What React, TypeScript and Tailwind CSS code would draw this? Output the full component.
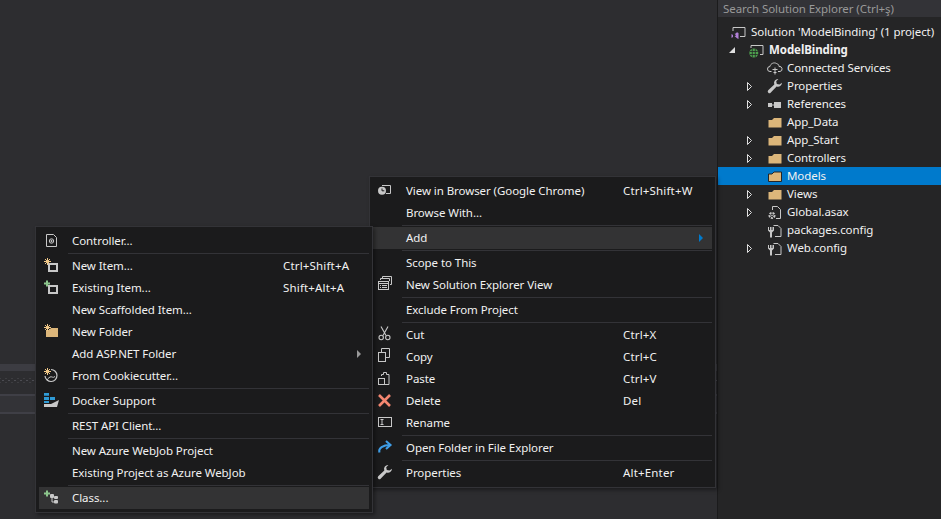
import React from "react";

const FOLDER = "#dcb67a";
const GRAY = "#c8c8c8";
const STAR = "M4.500 1v7M1 4.500h7M2 2l5 5M7 2 2 7";

type IconName =
  | "browser" | "newwin" | "cut" | "copy" | "paste" | "delete" | "rename" | "open" | "wrench"
  | "controller" | "newitem" | "existing" | "newfolder" | "cookie" | "docker" | "class";

function Icon({ name }: { name: IconName }) {
  switch (name) {
    case "browser":
      return (
        <svg width="16" height="16" viewBox="0 0 16 16" fill="none">
          <path d="M5 3.500h8.500v8H9" stroke={GRAY} />
          <circle cx="5" cy="8.700" r="4" fill={GRAY} />
          <path d="M5 6.500v2.300h2.300" stroke="#1b1b1c" />
        </svg>
      );
    case "newwin":
      return (
        <svg width="16" height="16" viewBox="0 0 16 16" fill="none" stroke={GRAY}>
          <path d="M5.500 2V.5h9v8H13M3.500 4V2.500h9V5" />
          <rect x="1.500" y="5.500" width="10" height="8" />
          <path d="M1.500 7.500h10M3 9.500h1M5 9.500h5M3 11.500h1M5 11.500h5" />
        </svg>
      );
    case "cut":
      return (
        <svg width="16" height="16" viewBox="0 0 16 16" fill="none" stroke={GRAY} strokeWidth="1.100">
          <path d="M4 .5 9 9.500M11 .5 6 9.500" />
          <circle cx="4.200" cy="11.500" r="2.200" />
          <circle cx="10.800" cy="11.500" r="2.200" />
        </svg>
      );
    case "copy":
      return (
        <svg width="16" height="16" viewBox="0 0 16 16" fill="none" stroke={GRAY}>
          <path d="M4.500 4V.5h8v9H9" />
          <rect x="1.500" y="4.500" width="7" height="9" />
        </svg>
      );
    case "paste":
      return (
        <svg width="16" height="16" viewBox="0 0 16 16" fill="none" stroke={GRAY}>
          <path d="M4.500 6V4.500h2V2.500h3v2h2.500v10H8" />
          <rect x="1.500" y="8.500" width="6" height="6" />
        </svg>
      );
    case "delete":
      return (
        <svg width="16" height="16" viewBox="0 0 16 16" fill="none">
          <path d="M2 3 13 14M13 3 2 14" stroke="#f48771" strokeWidth="2.600" />
        </svg>
      );
    case "rename":
      return (
        <svg width="16" height="16" viewBox="0 0 16 16" fill="none" stroke={GRAY}>
          <rect x="1.500" y="3.500" width="13" height="9" />
          <path d="M3.500 5.500h3M5 5.500v5M3.500 10.500h3" />
        </svg>
      );
    case "open":
      return (
        <svg width="16" height="16" viewBox="0 0 16 16" fill="none" stroke="#3f9ee8" strokeWidth="2.100">
          <path d="M2.500 13.500C1 9 6 6 13 6" />
          <path d="M9 2l4.500 4L9 10" />
        </svg>
      );
    case "wrench":
      return (
        <svg width="16" height="16" viewBox="0 0 16 16">
          <path d="M15 4.800a4 4 0 0 1-5.400 3.700L3.600 14.700a1.700 1.700 0 0 1-2.400-2.400L7.300 6.400A4 4 0 0 1 11.400 1L9.200 3.300l.6 2.600 2.700.7Z" fill={GRAY} />
        </svg>
      );
    case "controller":
      return (
        <svg width="16" height="16" viewBox="0 0 16 16" fill="none" stroke={GRAY}>
          <path d="M3.500 2.500h7l3 3v9h-10z" />
          <circle cx="8.500" cy="9" r="2.200" />
          <circle cx="8.500" cy="9" r=".7" fill={GRAY} />
        </svg>
      );
    case "newitem":
    case "existing":
      return (
        <svg width="16" height="16" viewBox="0 0 16 16" fill="none">
          <rect x="6" y="7" width="8" height="7" stroke={GRAY} strokeWidth="2" />
          {name === "newitem" ? (
            <path d={STAR} stroke="#f0c888" />
          ) : (
            <path d="M4 1.500v6M1 4.500h6" stroke="#8cc68c" strokeWidth="2" />
          )}
        </svg>
      );
    case "newfolder":
      return (
        <svg width="16" height="16" viewBox="0 0 16 16" fill="none">
          <path d="M3 14V7h3l2-2h7v9z" fill={FOLDER} />
          <path d={STAR} stroke="#f0c888" />
        </svg>
      );
    case "cookie":
      return (
        <svg width="16" height="16" viewBox="0 0 16 16" fill="none">
          <path d="M8 2.500a6 6 0 1 1-6 6.500" stroke={GRAY} strokeWidth="1.200" />
          <path d="M4.500 14c-.5-2 1-3 2.500-4s3 1.500 5-.5" stroke={GRAY} />
          <path d={STAR} stroke="#f0c888" />
        </svg>
      );
    case "docker":
      return (
        <svg width="16" height="16" viewBox="0 0 16 16">
          <path d="M1 1h5v2.700H1zM1 5h5v3H1zM7 5h5v3H7zM1 9h5v2H1z" fill="#2f9bd6" />
          <path d="M1 15v-3h7l8-4-2 7z" fill="#c8c8c8" />
        </svg>
      );
    case "class":
      return (
        <svg width="16" height="16" viewBox="0 0 16 16" fill="none">
          <path d="M9 5v8h3" stroke={GRAY} />
          <rect x="7" y="5" width="4" height="4" rx="1" fill={GRAY} />
          <rect x="11" y="7" width="4" height="3" rx="1" fill={GRAY} />
          <rect x="11" y="11" width="4" height="3.500" rx="1" fill={GRAY} />
          <path d="M4 1.500v6M1 4.500h6" stroke="#8cc68c" strokeWidth="2" />
        </svg>
      );
  }
}

type Row = { label?: string; keys?: string; icon?: IconName; arrow?: boolean; hot?: boolean; sep?: boolean };

const addMenu: Row[] = [
  { label: "Controller...", icon: "controller" },
  { sep: true },
  { label: "New Item...", keys: "Ctrl+Shift+A", icon: "newitem" },
  { label: "Existing Item...", keys: "Shift+Alt+A", icon: "existing" },
  { label: "New Scaffolded Item..." },
  { label: "New Folder", icon: "newfolder" },
  { label: "Add ASP.NET Folder", arrow: true },
  { label: "From Cookiecutter...", icon: "cookie" },
  { sep: true },
  { label: "Docker Support", icon: "docker" },
  { sep: true },
  { label: "REST API Client..." },
  { sep: true },
  { label: "New Azure WebJob Project" },
  { label: "Existing Project as Azure WebJob" },
  { sep: true },
  { label: "Class...", icon: "class", hot: true },
];

const folderMenu: Row[] = [
  { label: "View in Browser (Google Chrome)", keys: "Ctrl+Shift+W", icon: "browser" },
  { label: "Browse With..." },
  { sep: true },
  { label: "Add", arrow: true, hot: true },
  { sep: true },
  { label: "Scope to This" },
  { label: "New Solution Explorer View", icon: "newwin" },
  { sep: true },
  { label: "Exclude From Project" },
  { sep: true },
  { label: "Cut", keys: "Ctrl+X", icon: "cut" },
  { label: "Copy", keys: "Ctrl+C", icon: "copy" },
  { label: "Paste", keys: "Ctrl+V", icon: "paste" },
  { label: "Delete", keys: "Del", icon: "delete" },
  { label: "Rename", icon: "rename" },
  { sep: true },
  { label: "Open Folder in File Explorer", icon: "open" },
  { sep: true },
  { label: "Properties", keys: "Alt+Enter", icon: "wrench" },
];

function Menu({ rows, keysClass, arrowClass, className }: { rows: Row[]; keysClass: string; arrowClass: string; className: string }) {
  return (
    <div className={`absolute flex flex-col border border-[#333337] bg-[#1b1b1c] p-[3px] shadow-[2px_2px_4px_rgba(0,0,0,0.4)] ${className}`}>
      {rows.map((r, i) =>
        r.sep ? (
          <div key={i} className="flex h-[3px] items-center pl-[29px]">
            <div className="h-px w-full bg-[#333337]" />
          </div>
        ) : (
          <div key={i} className={`flex h-[22px] items-center ${r.hot ? "bg-[#333334]" : ""}`}>
            <div className="mb-[2px] flex w-[33px] pl-[4px]">{r.icon && <Icon name={r.icon} />}</div>
            <span>{r.label}</span>
            {r.keys && <span className={`absolute tracking-[0.17px] ${keysClass}`}>{r.keys}</span>}
            {r.arrow && <span className={`absolute h-0 w-0 border-y-[4px] border-l-[4px] border-y-transparent ${arrowClass}`} />}
          </div>
        ),
      )}
    </div>
  );
}

type TreeIcon = "sln" | "web" | "cloud" | "wrench" | "refs" | "folder" | "asax" | "config";

function TreeGlyph({ name, selected }: { name: TreeIcon; selected?: boolean }) {
  switch (name) {
    case "sln":
      return (
        <svg width="16" height="16" viewBox="0 0 16 16" fill="none">
          <path d="M2 7V3.500h12v9H9" stroke={GRAY} />
          <path d="M.5 10v4l1.500-1v-2zM7.500 9v6L6 14.300l-2-1.800-1 .8 2-2-2-2 1 .8 2-1.800z" fill="#b180d7" />
        </svg>
      );
    case "web":
      return (
        <svg width="16" height="16" viewBox="0 0 16 16" fill="none">
          <path d="M2 6V3.500h12v9h-3" stroke={GRAY} />
          <circle cx="4.800" cy="11" r="4.500" fill="#4ea24e" />
          <path d="M.8 9.500h8M.8 12.500h8M3.300 6.800v8.400M6.300 6.800v8.400" stroke="#252526" strokeWidth=".8" />
        </svg>
      );
    case "cloud":
      return (
        <svg width="16" height="16" viewBox="0 0 16 16" fill="none" stroke={GRAY}>
          <path d="M4.500 11.500H3a2.500 2.500 0 0 1 0-5c.5-3 4-4.500 6.500-3 2 .5 2.500 2 2.500 3a2.500 2.500 0 0 1 1 5h-2" />
          <path d="M8 7.500v7M5.500 9.500h5M6.500 12.500h3" />
        </svg>
      );
    case "wrench":
      return <Icon name="wrench" />;
    case "refs":
      return (
        <svg width="16" height="16" viewBox="0 0 16 16" fill={GRAY}>
          <rect x="1" y="7" width="4" height="4" />
          <rect x="5" y="8.500" width="2" height="1" />
          <rect x="7" y="6" width="7" height="6" />
        </svg>
      );
    case "folder":
      return (
        <svg width="16" height="16" viewBox="0 0 16 16">
          <path
            d="M1.500 13.500V6H5l2-2h7.500v9.500z"
            fill={FOLDER}
            stroke={selected ? "#252526" : "none"}
          />
        </svg>
      );
    case "asax":
      return (
        <svg width="16" height="16" viewBox="0 0 16 16" fill="none">
          <path d="M5.500 6V2.500h5l3 3v9H9" stroke={GRAY} />
          <circle cx="5" cy="11.500" r="2.500" stroke={GRAY} strokeWidth="2" strokeDasharray="2 1" />
          <circle cx="5" cy="11.500" r=".8" fill={GRAY} />
        </svg>
      );
    case "config":
      return (
        <svg width="16" height="16" viewBox="0 0 16 16" fill="none">
          <path d="M6.500 3.500h4.500l3 3v8H8" stroke={GRAY} />
          <path d="M1 5v3.500l2 2v5h2v-5l2-2V5H5.500v3h-1V5H3v3H2V5z" fill={GRAY} />
        </svg>
      );
  }
}

type Node = { label: string; icon: TreeIcon; expander?: "open" | "closed"; depth: number; bold?: boolean; selected?: boolean };

const tree: Node[] = [
  { label: "Solution 'ModelBinding' (1 project)", icon: "sln", depth: 0 },
  { label: "ModelBinding", icon: "web", depth: 1, expander: "open", bold: true },
  { label: "Connected Services", icon: "cloud", depth: 2 },
  { label: "Properties", icon: "wrench", depth: 2, expander: "closed" },
  { label: "References", icon: "refs", depth: 2, expander: "closed" },
  { label: "App_Data", icon: "folder", depth: 2 },
  { label: "App_Start", icon: "folder", depth: 2, expander: "closed" },
  { label: "Controllers", icon: "folder", depth: 2, expander: "closed" },
  { label: "Models", icon: "folder", depth: 2, selected: true },
  { label: "Views", icon: "folder", depth: 2, expander: "closed" },
  { label: "Global.asax", icon: "asax", depth: 2, expander: "closed" },
  { label: "packages.config", icon: "config", depth: 2 },
  { label: "Web.config", icon: "config", depth: 2, expander: "closed" },
];

const depthPad: Record<number, string> = { 0: "pl-[13px]", 1: "pl-[31px]", 2: "pl-[49px]" };
const expanderLeft: Record<number, string> = { 1: "left-[11px]", 2: "left-[29px]" };

export default function App() {
  return (
    <div className="relative flex h-[519px] w-[941px] overflow-hidden bg-[#2d2d30] font-['Noto_Sans',sans-serif] text-[11.5px] leading-none tracking-[-0.07px] text-[#f1f1f1]">
      <div className="flex w-[717px] flex-col justify-end">
        <div className="h-[7px] bg-[#3c3c42]" />
        <div className="h-[25px] border-b-2 border-[#3f3f46] pt-[7px]">
          <div className="h-[5px] w-full [background-image:radial-gradient(#4c4c52_0.7px,transparent_0.8px),radial-gradient(#4c4c52_0.7px,transparent_0.8px)] [background-position:0_0,3px_2.500px] [background-size:6px_5px]" />
        </div>
        <div className="h-[18px] border-b-2 border-[#3f3f46] bg-[#333337]" />
        <div className="h-[105px] bg-[#2d2d30]" />
      </div>

      <div className="flex w-[224px] flex-col border-l border-[#1b1b1c] bg-[#252526]">
        <div className="flex h-[17px] items-center bg-[#333337] pl-[5px] text-[#999999]">Search Solution Explorer (Ctrl+ş)</div>
        <div className="flex flex-col pt-[6px]">
          {tree.map((n) => (
            <div key={n.label} className={`relative flex h-[18px] items-center whitespace-nowrap ${depthPad[n.depth]} ${n.selected ? "bg-[#007acc]" : ""}`}>
              {n.expander === "open" && (
                <span className={`absolute ${expanderLeft[n.depth]} h-0 w-0 border-b-[6px] border-l-[6px] border-b-[#e0e0e0] border-l-transparent`} />
              )}
              {n.expander === "closed" && (
                <svg className={`absolute ${expanderLeft[n.depth]}`} width="6" height="9" viewBox="0 0 6 9" fill="none">
                  <path d="M.5.5 4.500 4.500.5 8.500z" stroke="#e0e0e0" />
                </svg>
              )}
              <TreeGlyph name={n.icon} selected={n.selected} />
              <span className={`ml-[4px] ${n.bold ? "font-bold" : ""}`}>{n.label}</span>
            </div>
          ))}
        </div>
      </div>

      <Menu
        rows={folderMenu}
        className="left-[369px] top-[176px] w-[347px]"
        keysClass="left-[253px]"
        arrowClass="left-[329px] border-l-[#007acc]"
      />
      <Menu
        rows={addMenu}
        className="left-[35px] top-[226px] w-[338px]"
        keysClass="left-[247px]"
        arrowClass="left-[321px] border-l-[#999999]"
      />
    </div>
  );
}
